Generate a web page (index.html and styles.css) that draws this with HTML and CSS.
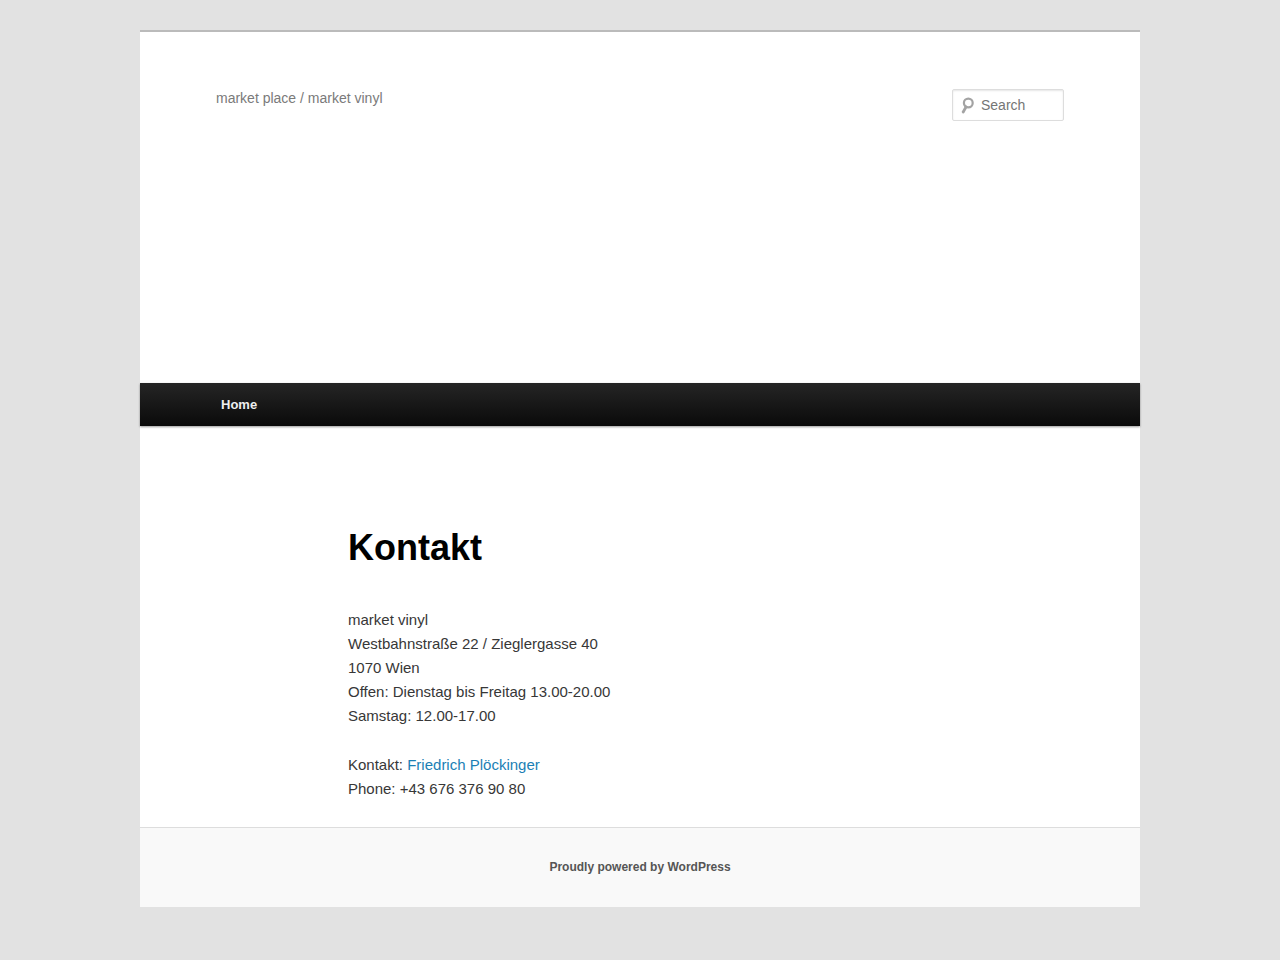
FILE: index.html
```html
<!DOCTYPE html>
<html lang="de">
<head>
    <meta charset="UTF-8">
    <meta name="viewport" content="width=device-width, initial-scale=1.0">
    <title>Kontakt | market vinyl</title>
    <link rel="stylesheet" href="styles.css">
</head>
<body>
    <div id="page">
        <header id="branding">
            <div class="top">
                <h2 class="site-description">market place / market vinyl</h2>
                <form class="searchform">
                    <label for="s">
                        <svg width="14" height="17" viewBox="0 0 14 17" role="img" aria-label="Search">
                            <circle cx="7.3" cy="6" r="4.4" fill="none" stroke="#a3a3a3" stroke-width="2.2"/>
                            <path d="M5 10 L2.2 15" stroke="#a3a3a3" stroke-width="2.8" stroke-linecap="round"/>
                        </svg>
                    </label>
                    <input type="text" id="s" name="s" placeholder="Search">
                </form>
            </div>
            <nav id="access">
                <ul>
                    <li><a href="#">Home</a></li>
                </ul>
            </nav>
        </header>

        <main id="main">
            <article class="entry">
                <h1>Kontakt</h1>
                <p>market vinyl<br>
                Westbahnstraße 22 / Zieglergasse 40<br>
                1070 Wien<br>
                Offen: Dienstag bis Freitag 13.00-20.00<br>
                Samstag: 12.00-17.00</p>
                <p>Kontakt: <a href="#">Friedrich Plöckinger</a><br>
                Phone: +43 676 376 90 80</p>
            </article>
        </main>

        <footer id="colophon">
            <a href="#">Proudly powered by WordPress</a>
        </footer>
    </div>
</body>
</html>
```
FILE: styles.css
```css
* {
    margin: 0;
    padding: 0;
    box-sizing: border-box;
}
body {
    background: #e2e2e2;
    padding: 30px 32px;
    font-family: "Liberation Sans", Arial, sans-serif;
    font-size: 15px;
    line-height: 24px;
    color: #373737;
}
a {
    color: #1b7fb5;
    text-decoration: none;
}
#page {
    max-width: 1000px;
    margin: 0 auto;
    background: #fff;
}

/* header */
#branding {
    border-top: 2px solid #bbb;
}
.top {
    display: flex;
    justify-content: space-between;
    align-items: flex-start;
    min-height: 351px;
    padding: 57px 76px 0;
}
.site-description {
    font-size: 14px;
    font-weight: normal;
    line-height: 18px;
    color: #7a7a7a;
}
.searchform {
    display: flex;
    align-items: center;
    width: 112px;
    height: 32px;
    padding-left: 8px;
    border: 1px solid #ddd;
    border-radius: 2px;
    box-shadow: inset 0 1px 2px rgba(0,0,0,0.1);
}
.searchform label {
    display: flex;
}
#s {
    flex: 1;
    min-width: 0;
    padding-left: 6px;
    border: none;
    outline: none;
    background: none;
    font-family: inherit;
    font-size: 14px;
    color: #373737;
}
#s::placeholder {
    color: #757575;
}

/* menu */
#access {
    position: relative;
    background: linear-gradient(#252525, #0a0a0a);
    box-shadow: 0 1px 2px rgba(0,0,0,0.4);
}
#access ul {
    display: flex;
    list-style: none;
    padding: 0 69px;
}
#access a {
    display: block;
    padding: 0 12px;
    font-size: 13px;
    font-weight: bold;
    line-height: 43px;
    color: #eee;
}

/* content */
#main {
    padding: 98px 208px 1px;
}
.entry h1 {
    margin-bottom: 36px;
    font-size: 36px;
    line-height: 48px;
    color: #000;
}
.entry p {
    margin-bottom: 25px;
}

/* footer */
#colophon {
    padding: 30px;
    border-top: 1px solid #ddd;
    background: #f9f9f9;
    text-align: center;
    font-size: 12px;
    line-height: 19px;
}
#colophon a {
    font-weight: bold;
    color: #555;
}
```
